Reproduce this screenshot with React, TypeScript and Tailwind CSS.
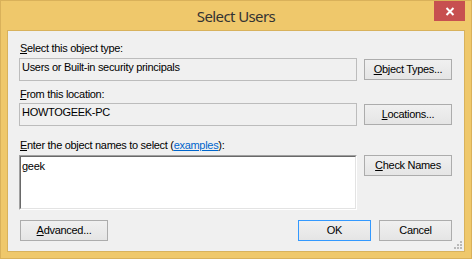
import React from 'react';

const ui = { fontFamily: '"Liberation Sans", Arial, sans-serif' };

const Btn: React.FC<{ w: string; def?: boolean; children: React.ReactNode }> = ({ w, def, children }) => (
  <button
    className={`${w} h-[21px] flex items-center justify-center text-[11px] leading-[13px] tracking-[-0.3px] text-black border bg-gradient-to-b from-[#f0f0f0] to-[#e5e5e5] ${
      def ? 'border-[#3399ff]' : 'border-[#acacac]'
    }`}
  >
    {children}
  </button>
);

const ReadOnlyField: React.FC<{ value: string }> = ({ value }) => (
  <div className="w-[338px] h-[23px] border border-[#bcbcbc] bg-[#f0f0f0] pl-[2px] pt-[2px] text-[11px] leading-[13px] text-black">
    {value}
  </div>
);

export default function App() {
  return (
    <div
      className="w-[472px] h-[259px] bg-[#efc86b] border border-[#d9b15a] flex flex-col select-none"
      style={ui}
    >
      {/* Title bar */}
      <div className="h-[29px] grid grid-cols-[1fr_auto_1fr]">
        <div />
        <div
          className="self-center text-[15px] leading-[20px] tracking-[-0.6px] text-[#333333]"
          style={{ fontFamily: '"Noto Sans", "Open Sans", sans-serif' }}
        >
          Select Users
        </div>
        <div className="flex justify-end pr-[6px]">
          <div className="w-[31px] h-[20px] bg-[#c75050] flex items-center justify-center">
            <svg width="10" height="9" viewBox="0 0 10 9">
              <path d="M1.5 1 L8.5 8 M8.5 1 L1.5 8" stroke="#fff" strokeWidth="2" fill="none" />
            </svg>
          </div>
        </div>
      </div>

      {/* Client area */}
      <div className="mx-[6px] h-[222px] border border-[#d8b25c] bg-[#f0f0f0] relative flex flex-col pl-[11px] pr-[12px] text-[11px] leading-[13px] tracking-[-0.3px] text-black">
        <div className="mt-[11px] pl-[1px] h-[13px]">
          <u>S</u>elect this object type:
        </div>
        <div className="mt-[3px] flex items-center gap-[7px]">
          <ReadOnlyField value="Users or Built-in security principals" />
          <Btn w="w-[88px]">
            <span><u>O</u>bject Types...</span>
          </Btn>
        </div>

        <div className="mt-[7px] pl-[1px] h-[13px]">
          <u>F</u>rom this location:
        </div>
        <div className="mt-[2px] flex items-center gap-[7px]">
          <ReadOnlyField value="HOWTOGEEK-PC" />
          <Btn w="w-[88px]">
            <span><u>L</u>ocations...</span>
          </Btn>
        </div>

        <div className="mt-[13px] pl-[1px] h-[13px]">
          <u>E</u>nter the object names to select (
          <span className="text-[#0066cc] underline">examples</span>):
        </div>
        <div className="mt-[3px] flex items-start gap-[7px]">
          <div className="w-[338px] h-[55px] border border-t-[#a0a0a0] border-l-[#a0a0a0] border-b-[#ffffff] border-r-[#ffffff]">
            <div className="h-full border border-t-[#696969] border-l-[#696969] border-b-[#e3e3e3] border-r-[#e3e3e3] bg-white pl-[1px] pt-[3px]">
              geek
            </div>
          </div>
          <Btn w="w-[88px]">
            <span><u>C</u>heck Names</span>
          </Btn>
        </div>

        <div className="mt-[10px] flex items-center">
          <div className="ml-[1px]">
            <Btn w="w-[88px]">
              <span><u>A</u>dvanced...</span>
            </Btn>
          </div>
          <div className="flex-1" />
          <div className="flex gap-[8px]">
            <Btn w="w-[73px]" def>
              OK
            </Btn>
            <Btn w="w-[73px]">Cancel</Btn>
          </div>
        </div>

        {/* size grip */}
        <svg className="absolute right-[1px] bottom-[1px]" width="10" height="10" viewBox="0 0 10 10">
          <rect x="7" y="1" width="2" height="2" fill="#b9b9b9" />
          <rect x="4" y="4" width="2" height="2" fill="#b9b9b9" />
          <rect x="7" y="4" width="2" height="2" fill="#b9b9b9" />
          <rect x="1" y="7" width="2" height="2" fill="#b9b9b9" />
          <rect x="4" y="7" width="2" height="2" fill="#b9b9b9" />
          <rect x="7" y="7" width="2" height="2" fill="#b9b9b9" />
        </svg>
      </div>
    </div>
  );
}
